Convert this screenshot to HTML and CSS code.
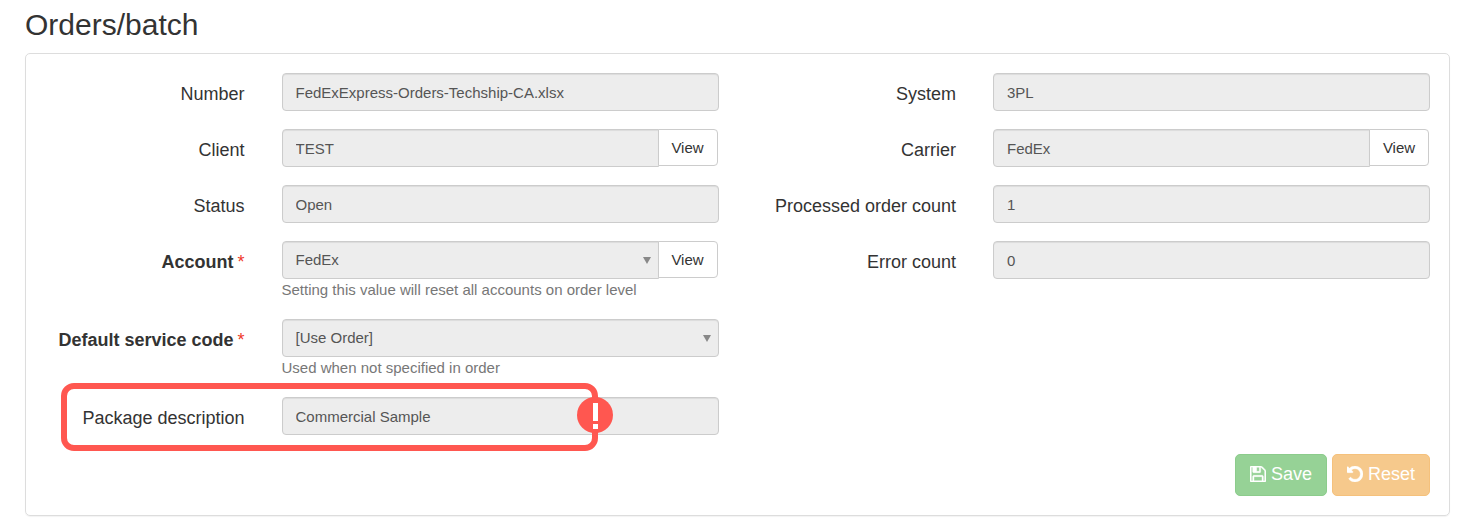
FILE: index.html
```html
<!DOCTYPE html>
<html lang="en">
<head>
<meta charset="utf-8">
<title>Orders/batch</title>
<link rel="stylesheet" href="styles.css">
</head>
<body>
<main class="page">
  <h1 class="title">Orders/batch</h1>
  <form class="panel">
    <div class="columns">
      <div class="column">
        <div class="row">
          <label class="label" for="number">Number</label>
          <div class="field"><input class="control" id="number" type="text" value="FedExExpress-Orders-Techship-CA.xlsx" disabled></div>
        </div>
        <div class="row">
          <label class="label" for="client">Client</label>
          <div class="field group"><input class="control" id="client" type="text" value="TEST" disabled><button class="view" type="button">View</button></div>
        </div>
        <div class="row">
          <label class="label" for="status">Status</label>
          <div class="field"><input class="control" id="status" type="text" value="Open" disabled></div>
        </div>
        <div class="row">
          <label class="label required" for="account">Account</label>
          <div class="field">
            <div class="group">
              <div class="select"><select class="control" id="account" disabled><option>FedEx</option></select></div>
              <button class="view" type="button">View</button>
            </div>
            <p class="help">Setting this value will reset all accounts on order level</p>
          </div>
        </div>
        <div class="row">
          <label class="label required" for="service">Default service code</label>
          <div class="field">
            <div class="select"><select class="control" id="service" disabled><option>[Use Order]</option></select></div>
            <p class="help">Used when not specified in order</p>
          </div>
        </div>
        <div class="row">
          <label class="label" for="description">Package description</label>
          <div class="field"><input class="control" id="description" type="text" value="Commercial Sample" disabled></div>
          <div class="highlight">
            <svg class="alert" viewBox="0 0 36 36" aria-hidden="true"><circle cx="18" cy="18" r="18" fill="#ff5750"/><path d="M16 6h5v18h-5zM16 27h5v5h-5z" fill="#fff"/></svg>
          </div>
        </div>
      </div>
      <div class="column">
        <div class="row">
          <label class="label" for="system">System</label>
          <div class="field"><input class="control" id="system" type="text" value="3PL" disabled></div>
        </div>
        <div class="row">
          <label class="label" for="carrier">Carrier</label>
          <div class="field group"><input class="control" id="carrier" type="text" value="FedEx" disabled><button class="view" type="button">View</button></div>
        </div>
        <div class="row">
          <label class="label" for="processed">Processed order count</label>
          <div class="field"><input class="control" id="processed" type="text" value="1" disabled></div>
        </div>
        <div class="row">
          <label class="label" for="errors">Error count</label>
          <div class="field"><input class="control" id="errors" type="text" value="0" disabled></div>
        </div>
      </div>
    </div>
    <div class="actions">
      <button class="action save" type="submit" disabled>
        <svg class="icon" viewBox="0 128 1536 1536" aria-hidden="true"><path fill="currentColor" stroke="currentColor" stroke-width="40" d="M384 1536h768v-384h-768v384zM1280 1536h128v-896q0-14-10-38.500t-20-34.500l-281-281q-10-10-34-20t-39-10v416q0 40-28 68t-68 28h-576q-40 0-68-28t-28-68v-416h-128v1280h128v-416q0-40 28-68t68-28h832q40 0 68 28t28 68v416zM896 608v-320q0-13-9.500-22.500t-22.500-9.500h-192q-13 0-22.500 9.500t-9.500 22.500v320q0 13 9.500 22.500t22.500 9.500h192q13 0 22.500-9.500t9.500-22.500zM1536 640v928q0 40-28 68t-68 28h-1344q-40 0-68-28t-28-68v-1344q0-40 28-68t68-28h928q40 0 88 20t76 48l280 280q28 28 48 76t20 88z"/></svg>Save</button>
      <button class="action reset" type="reset" disabled>
        <svg class="icon" viewBox="0 128 1536 1536" aria-hidden="true"><path fill="currentColor" stroke="currentColor" stroke-width="40" d="M1536 896q0 156-61 298t-164 245-245 164-298 61q-172 0-327-72.500t-264-204.500q-7-10-6.500-22.500t8.500-20.500l137-138q10-9 25-9 16 2 23 12 73 95 179 147t225 52q104 0 198.500-40.500t163.500-109.500 109.500-163.500 40.500-198.500-40.500-198.500-109.500-163.500-163.500-109.500-198.500-40.500q-98 0-188 35.500t-160 101.500l137 138q31 30 14 69-17 40-59 40h-448q-26 0-45-19t-19-45v-448q0-42 40-59 39-17 69 14l130 129q107-101 244.500-156.500t284.500-55.500q156 0 298 61t245 164 164 245 61 298z"/></svg>Reset</button>
    </div>
  </form>
</main>
</body>
</html>
```

FILE: styles.css
```css
* {
  box-sizing: border-box;
}

body {
  margin: 0;
  background: #fff;
  color: #333;
  font-family: "Liberation Sans", Arial, sans-serif;
  font-size: 15px;
  line-height: 22px;
}

.page {
  padding: 8px 30px 13px 25px;
}

.title {
  margin: 0 0 11px;
  font-size: 30px;
  font-weight: 400;
  line-height: 34px;
}

.panel {
  padding: 19px 0;
  border: 1px solid #ddd;
  border-radius: 5px;
  box-shadow: 0 1px 1px rgba(0, 0, 0, 0.05);
}

.columns {
  display: grid;
  grid-template-columns: 1fr 1fr;
}

.column {
  display: flex;
  flex-direction: column;
  gap: 18px;
  padding-right: 19px;
}

.row {
  position: relative;
  display: grid;
  grid-template-columns: 1fr 2fr;
  column-gap: 37px;
  align-items: start;
}

.label {
  padding-top: 10px;
  font-size: 18px;
  text-align: right;
  white-space: nowrap;
}

.required {
  font-weight: 700;
}

.required::after {
  content: "*";
  margin-left: 4px;
  color: #f0392b;
  font-weight: 400;
}

.field {
  min-width: 0;
}

.group {
  display: flex;
  align-items: flex-start;
  padding-right: 1px;
}

.control {
  display: block;
  width: 100%;
  height: 38px;
  margin: 0;
  padding: 0 13px;
  border: 1px solid #ccc;
  border-radius: 4px;
  background: #ededed;
  box-shadow: inset 0 1px 1px rgba(0, 0, 0, 0.075);
  color: #555;
  font: inherit;
  opacity: 1;
  appearance: none;
}

.group .control {
  border-top-right-radius: 0;
  border-bottom-right-radius: 0;
}

.select {
  position: relative;
  flex: 1;
}

.select::after {
  content: "";
  position: absolute;
  top: 16px;
  right: 8px;
  border: 4px solid transparent;
  border-top: 7px solid #888;
  border-bottom: 0;
}

.view {
  position: relative;
  flex: 0 0 60px;
  height: 37px;
  margin: 0 0 0 -1px;
  padding: 0;
  border: 1px solid #ccc;
  border-radius: 0 4px 4px 0;
  background: #fff;
  color: #333;
  font: inherit;
}

.help {
  margin: 0;
  color: #777;
}

.highlight {
  position: absolute;
  top: -14px;
  right: 121px;
  bottom: -16px;
  left: 35px;
  border: 6px solid #ff5750;
  border-radius: 13px;
  pointer-events: none;
}

.alert {
  position: absolute;
  top: 8px;
  right: -21px;
  width: 36px;
  height: 36px;
}

.actions {
  display: flex;
  justify-content: flex-end;
  gap: 5px;
  padding: 19px 19px 0;
}

.action {
  display: flex;
  align-items: center;
  gap: 5px;
  height: 42px;
  padding: 0 14px 2px;
  border: 1px solid;
  border-radius: 5px;
  color: #fff;
  font: inherit;
  font-size: 18px;
}

.save {
  border-color: #8ccc8c;
  background: #96d296;
}

.reset {
  border-color: #f5c17c;
  background: #f6c98c;
}

.icon {
  width: 16px;
  height: 16px;
}
```
